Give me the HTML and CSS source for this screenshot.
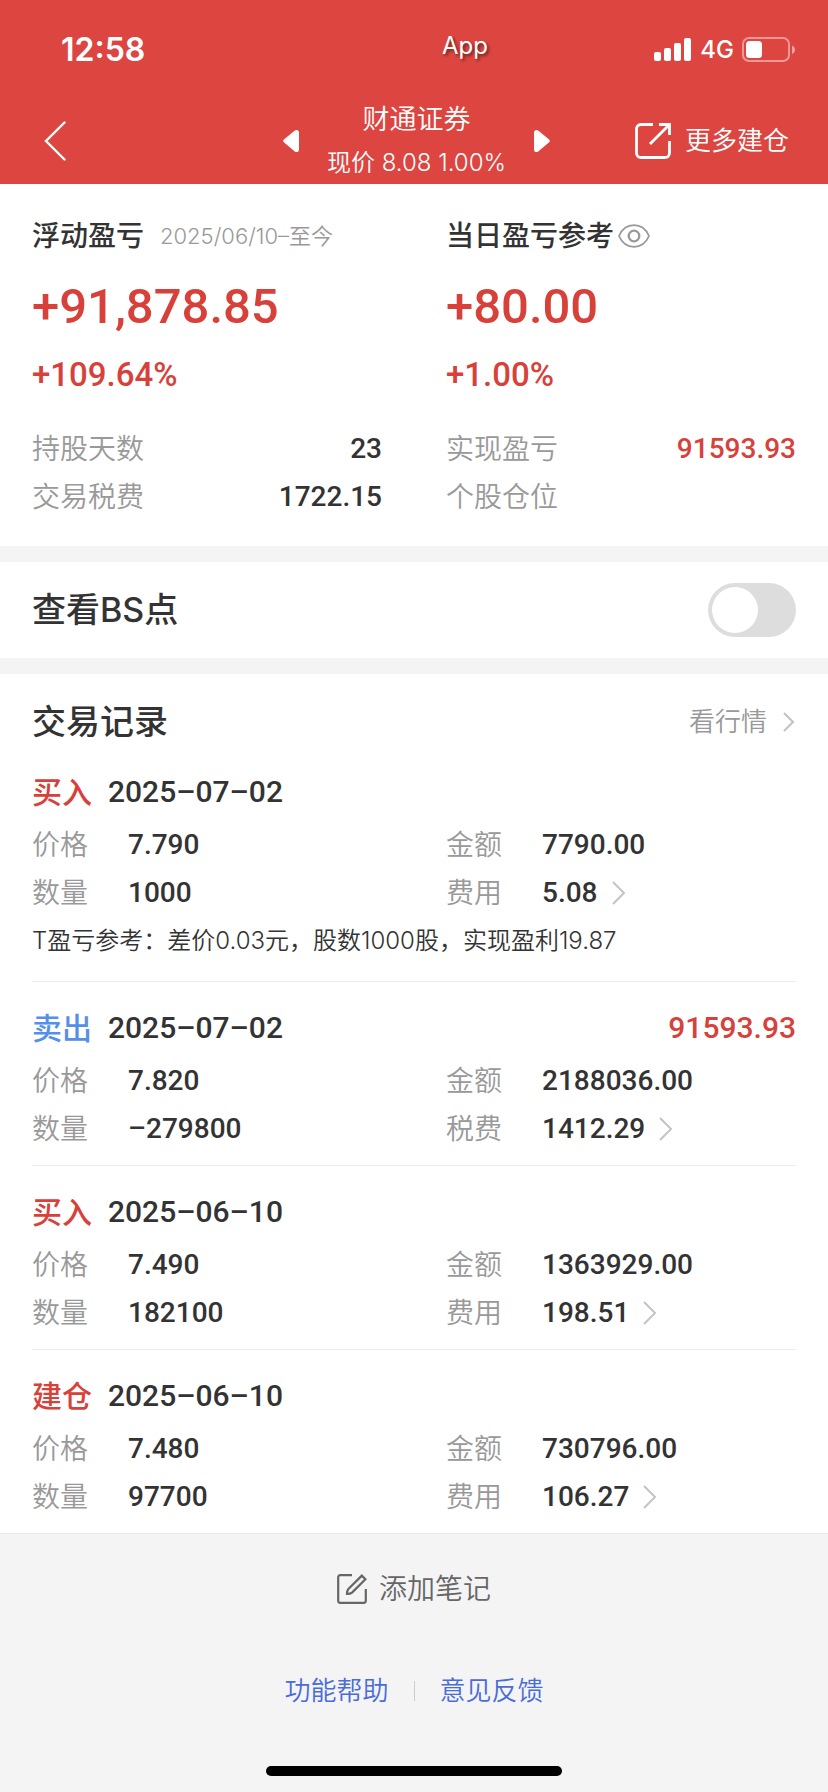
FILE: index.html
```html
<!DOCTYPE html>
<html lang="zh-CN">
<head>
<meta charset="utf-8">
<meta name="viewport" content="width=device-width">
<title>财通证券</title>
<link rel="stylesheet" href="styles.css">
</head>
<body>
<header class="top">
  <div class="status">
    <span class="clock">12:58</span>
    <div class="status-right">
      <span class="app">App</span>
      <div class="signals">
        <svg width="38" height="24" viewBox="0 0 38 24" fill="#fff"><rect x="0" y="14" width="7" height="9" rx="2"/><rect x="10" y="10" width="7" height="13" rx="2"/><rect x="20" y="5" width="7" height="18" rx="2"/><rect x="30" y="0" width="7" height="23" rx="2"/></svg>
        <span class="net">4G</span>
        <svg width="54" height="26" viewBox="0 0 54 26"><rect x="1" y="1" width="46" height="23" rx="6" fill="none" stroke="#fff" stroke-opacity=".45" stroke-width="2"/><rect x="4" y="4" width="16" height="17" rx="3.5" fill="#fff"/><path d="M50 8.500c4 1.500 4 7 0 8.500z" fill="#fff" fill-opacity=".5"/></svg>
      </div>
    </div>
  </div>
  <nav class="nav">
    <button class="back" aria-label="返回"><svg width="22" height="40" viewBox="0 0 22 40" fill="none" stroke="#fff" stroke-width="2.400" stroke-linecap="round"><path d="M20.500 1.500 2 20l18.500 18.500"/></svg></button>
    <div class="stock">
      <button aria-label="上一只"><svg width="16" height="24" viewBox="0 0 16 24" fill="#fff"><path d="M11.500 1.800C13.500 0 16 1 16 3.500v17c0 2.500-2.500 3.500-4.500 1.700L1.200 13.600c-1.400-1.200-1.400-2.200 0-3.400z"/></svg></button>
      <div class="stock-text"><h1 class="name">财通证券</h1><p class="price">现价 8.08 1.00%</p></div>
      <button aria-label="下一只"><svg width="16" height="24" viewBox="0 0 16 24" fill="#fff"><path d="M4.500 1.800C2.500 0 0 1 0 3.500v17c0 2.500 2.500 3.500 4.500 1.700l10.300-8.600c1.400-1.200 1.400-2.200 0-3.400z"/></svg></button>
    </div>
    <button class="more"><svg width="36" height="36" viewBox="0 0 36 36" fill="none" stroke="#fff" stroke-width="2.800"><path d="M18 1.500H6A4.500 4.500 0 0 0 1.500 6v24A4.500 4.500 0 0 0 6 34.500h24a4.500 4.500 0 0 0 4.500-4.500V18M24 1.500h10.500V12M34 2 15 21"/></svg>更多建仓</button>
  </nav>
</header>
<main>
  <section class="stats">
    <div class="stat">
      <h2 class="stat-title">浮动盈亏<span class="period">2025/06/10–至今</span></h2>
      <p class="big num">+91,878.85</p>
      <p class="pct num">+109.64%</p>
      <dl class="facts">
        <div class="fact"><dt>持股天数</dt><dd class="num">23</dd></div>
        <div class="fact"><dt>交易税费</dt><dd class="num">1722.15</dd></div>
      </dl>
    </div>
    <div class="stat">
      <h2 class="stat-title">当日盈亏参考<button class="eye" aria-label="显示或隐藏"><svg width="32" height="24" viewBox="0 0 32 24" fill="none" stroke="#999" stroke-width="1.800"><path d="M1 12C4 5 9.500 1.200 16 1.200S28 5 31 12c-3 7-8.500 10.800-15 10.800S4 19 1 12z"/><circle cx="16" cy="12" r="5.300" stroke-width="2.300"/></svg></button></h2>
      <p class="big num">+80.00</p>
      <p class="pct num">+1.00%</p>
      <dl class="facts">
        <div class="fact"><dt>实现盈亏</dt><dd class="num red">91593.93</dd></div>
        <div class="fact"><dt>个股仓位</dt><dd></dd></div>
      </dl>
    </div>
  </section>
  <section class="bs">
    <label class="heading" for="bs">查看BS点</label>
    <input class="switch" type="checkbox" role="switch" id="bs">
  </section>
  <section class="records">
    <div class="records-head"><h2 class="heading">交易记录</h2><a class="quote" href="#">看行情<svg width="12" height="20" viewBox="0 0 12 20" fill="none" stroke="#c4c4c4" stroke-width="2.200"><path d="m1 1 9 9-9 9"/></svg></a></div>
    <article class="record">
      <h3 class="record-head"><span class="red">买入</span><span class="num">2025–07–02</span></h3>
      <dl class="grid">
        <div class="cell"><dt>价格</dt><dd class="num">7.790</dd></div>
        <div class="cell"><dt>金额</dt><dd class="num">7790.00</dd></div>
        <div class="cell"><dt>数量</dt><dd class="num">1000</dd></div>
        <div class="cell"><dt>费用</dt><dd class="num">5.08<svg class="chev" width="14" height="24" viewBox="0 0 14 24"><path d="m1 1 11 11L1 23"/></svg></dd></div>
      </dl>
      <p class="note">T盈亏参考：差价0.03元，股数1000股，实现盈利19.87</p>
    </article>
    <article class="record">
      <h3 class="record-head"><span class="blue">卖出</span><span class="num">2025–07–02</span><span class="num red gain">91593.93</span></h3>
      <dl class="grid">
        <div class="cell"><dt>价格</dt><dd class="num">7.820</dd></div>
        <div class="cell"><dt>金额</dt><dd class="num">2188036.00</dd></div>
        <div class="cell"><dt>数量</dt><dd class="num">–279800</dd></div>
        <div class="cell"><dt>税费</dt><dd class="num">1412.29<svg class="chev" width="14" height="24" viewBox="0 0 14 24"><path d="m1 1 11 11L1 23"/></svg></dd></div>
      </dl>
    </article>
    <article class="record">
      <h3 class="record-head"><span class="red">买入</span><span class="num">2025–06–10</span></h3>
      <dl class="grid">
        <div class="cell"><dt>价格</dt><dd class="num">7.490</dd></div>
        <div class="cell"><dt>金额</dt><dd class="num">1363929.00</dd></div>
        <div class="cell"><dt>数量</dt><dd class="num">182100</dd></div>
        <div class="cell"><dt>费用</dt><dd class="num">198.51<svg class="chev" width="14" height="24" viewBox="0 0 14 24"><path d="m1 1 11 11L1 23"/></svg></dd></div>
      </dl>
    </article>
    <article class="record">
      <h3 class="record-head"><span class="red">建仓</span><span class="num">2025–06–10</span></h3>
      <dl class="grid">
        <div class="cell"><dt>价格</dt><dd class="num">7.480</dd></div>
        <div class="cell"><dt>金额</dt><dd class="num">730796.00</dd></div>
        <div class="cell"><dt>数量</dt><dd class="num">97700</dd></div>
        <div class="cell"><dt>费用</dt><dd class="num">106.27<svg class="chev" width="14" height="24" viewBox="0 0 14 24"><path d="m1 1 11 11L1 23"/></svg></dd></div>
      </dl>
    </article>
  </section>
</main>
<footer class="foot">
  <button class="add"><svg width="30" height="30" viewBox="0 0 30 30" fill="none" stroke="#666" stroke-width="2.200"><path d="M15 1.200H3.200a2 2 0 0 0-2 2v23.600a2 2 0 0 0 2 2h23.600a2 2 0 0 0 2-2V15M24.800 1.600l3.600 3.600L15 18.600q-1.600 1.400-5 1.400 0-3.400 1.400-5z"/></svg>添加笔记</button>
  <div class="links"><a href="#">功能帮助</a><span class="sep"></span><a href="#">意见反馈</a></div>
  <div class="home"></div>
</footer>
</body>
</html>
```
FILE: styles.css
```css
* { box-sizing: border-box; margin: 0; padding: 0; }
body {
  min-height: 100vh;
  display: flex;
  flex-direction: column;
  background: #f4f4f4;
  color: #333;
  font-family: Inter, "Noto Sans CJK SC", sans-serif;
  font-size: 28px;
  font-weight: 350;
  line-height: 48px;
}
button { border: 0; background: none; font: inherit; color: inherit; display: flex; align-items: center; }
a { text-decoration: none; color: inherit; }
svg { display: block; flex: none; }
h1, h2, h3 { font-weight: 350; }
.num { font-family: Roboto, "Noto Sans CJK SC", sans-serif; font-weight: 500; }
.red { color: #d8413a; }
.blue { color: #5590e8; }

.top { background: #dd4540; color: #fff; }
.status { height: 98px; display: grid; grid-template-columns: 1fr 1fr; align-items: center; padding-top: 2px; }
.clock { padding-left: 61px; font-size: 32px; font-weight: 600; }
.status-right { display: flex; align-items: center; justify-content: space-between; padding: 0 32px 0 28px; }
.app { font-size: 24px; font-weight: 400; text-shadow: 2px 2px 3px rgba(0, 0, 0, .5); padding-bottom: 8px; }
.signals { display: flex; align-items: center; gap: 8px; }
.net { font-size: 24px; font-weight: 500; }
.nav { display: grid; grid-template-columns: 1fr auto 1fr; align-items: center; padding: 0 39px 0 44px; }
.stock { display: flex; align-items: center; gap: 28px; }
.stock-text { text-align: center; line-height: 43px; }
.name { font-size: 27px; }
.price { font-size: 24px; }
.more { justify-self: end; gap: 14px; font-size: 26px; }

.stats { background: #fff; display: grid; grid-template-columns: 1fr 1fr; gap: 64px; padding: 28px 32px 25px; }
.stat-title { display: flex; align-items: center; font-size: 28px; font-weight: 500; }
.period { margin-left: 16px; font-size: 22px; font-weight: 350; color: #999; }
.eye { margin-left: 4px; }
.big { margin-top: 11px; font-size: 49px; line-height: 72px; color: #d8413a; }
.pct { margin-top: 8px; font-size: 33px; color: #d8413a; }
.facts { margin-top: 26px; }
.fact { display: flex; justify-content: space-between; }
dt { color: #999; }

.bs { margin: 16px 0; padding: 0 32px; height: 96px; display: flex; align-items: center; justify-content: space-between; background: #fff; }
.heading { font-size: 34px; font-weight: 500; }
.switch { appearance: none; width: 88px; height: 54px; padding: 4px; border-radius: 27px; background: #ddd; }
.switch::before { content: ""; display: block; width: 46px; height: 46px; border-radius: 50%; background: #fff; }
.switch:checked { background: #d8413a; }
.switch:checked::before { margin-left: auto; }

.records { background: #fff; padding-top: 24px; }
.records-head { display: flex; align-items: center; justify-content: space-between; height: 48px; padding: 0 32px; }
.quote { display: flex; align-items: center; gap: 16px; padding-right: 1px; font-size: 26px; color: #999; }
.record { margin: 0 32px; padding: 22px 0 12px; border-bottom: 1px solid #ebebeb; }
.record:last-child { margin: 0; padding-left: 32px; padding-right: 32px; }
.record-head { display: flex; gap: 16px; font-size: 30px; font-weight: 500; }
.gain { margin-left: auto; }
.grid { margin-top: 5px; display: grid; grid-template-columns: 1fr 1fr; column-gap: 64px; }
.cell { display: flex; }
.cell dt { width: 96px; }
.cell dd { display: flex; align-items: center; gap: 14px; }
.chev { fill: none; stroke: #c4c4c4; stroke-width: 2; }
.note { margin-bottom: 4px; font-size: 24px; }

.foot { flex: 1; display: flex; flex-direction: column; align-items: center; padding: 31px 0 16px; }
.add { gap: 12px; color: #666; }
.links { margin-top: 54px; display: flex; align-items: center; gap: 25px; font-size: 26px; color: #4a6bdb; }
.sep { width: 1px; height: 20px; background: #ccc; }
.home { margin-top: auto; width: 296px; height: 10px; border-radius: 5px; background: #000; }
```
